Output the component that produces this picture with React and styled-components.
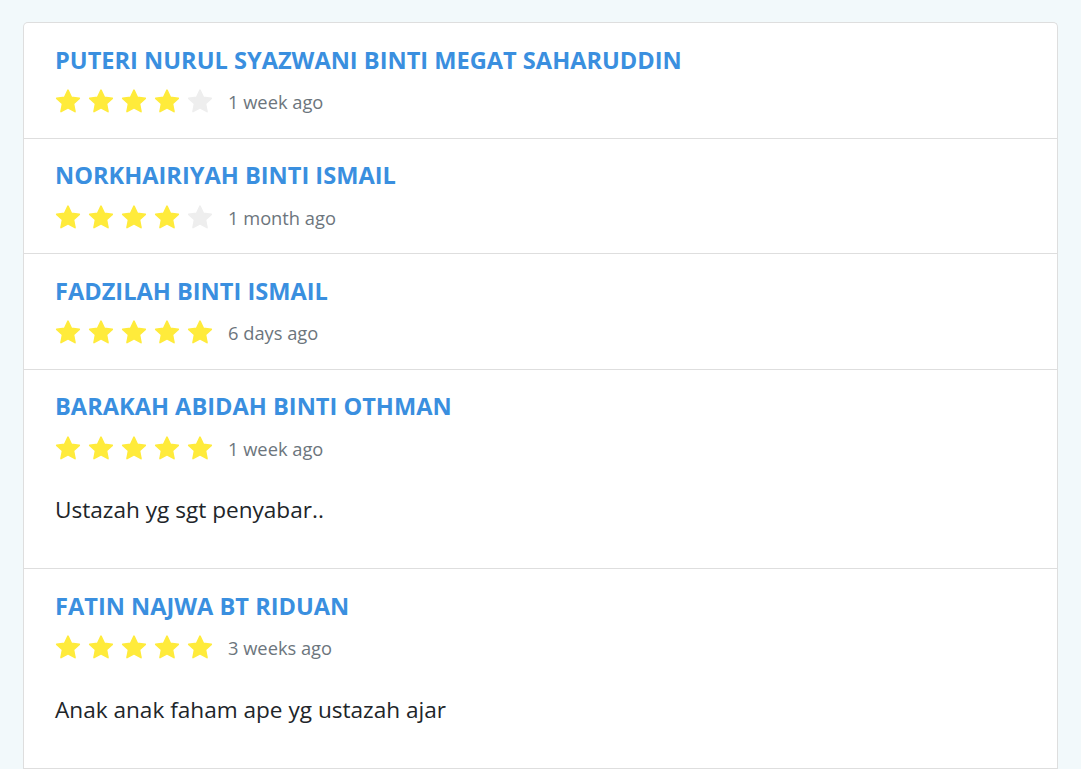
import React from "react";
import styled, { createGlobalStyle } from "styled-components";

const Global = createGlobalStyle`
  html, body { margin: 0; padding: 0; }
  body {
    background: #f2f9fb;
    font-family: "Open Sans", "Noto Sans", sans-serif;
  }
`;

const Page = styled.div`
  padding: 22px 23px 0 23px;
`;

const Card = styled.div`
  background: #ffffff;
  border: 1px solid #dedede;
  border-bottom: none;
  border-radius: 5px 5px 0 0;
`;

const Item = styled.div`
  padding: 20.5px 31px 23px 31px;
  border-bottom: 1px solid #dedede;
`;

const Name = styled.div`
  color: #3a8fdf;
  font-weight: 700;
  font-size: 23.6px;
  line-height: 32px;
`;

const Meta = styled.div`
  display: flex;
  align-items: center;
  margin-top: 13px;
  height: 26px;
`;

const Stars = styled.div`
  display: flex;
  gap: 7px;
`;

const When = styled.span`
  margin-left: 15px;
  color: #6c757d;
  font-size: 18.3px;
`;

const Body = styled.p`
  margin: 34px 0 20px 0;
  font-size: 22.6px;
  color: #212529;
  line-height: 30px;
`;

const Star = ({ on }) => (
  <svg width="26" height="25" viewBox="0 0 26 25">
    <path
      d="M13 1.2 L16.4 8.3 L24.3 9.3 L18.5 14.7 L20 22.6 L13 18.8 L6 22.6 L7.5 14.7 L1.7 9.3 L9.6 8.3 Z"
      fill={on ? "#ffeb3b" : "#eeeeee"}
      stroke={on ? "#ffeb3b" : "#eeeeee"}
      strokeWidth="1.6"
      strokeLinejoin="round"
    />
  </svg>
);

const reviews = [
  { name: "PUTERI NURUL SYAZWANI BINTI MEGAT SAHARUDDIN", rating: 4, when: "1 week ago" },
  { name: "NORKHAIRIYAH BINTI ISMAIL", rating: 4, when: "1 month ago" },
  { name: "FADZILAH BINTI ISMAIL", rating: 5, when: "6 days ago" },
  { name: "BARAKAH ABIDAH BINTI OTHMAN", rating: 5, when: "1 week ago", text: "Ustazah yg sgt penyabar.." },
  { name: "FATIN NAJWA BT RIDUAN", rating: 5, when: "3 weeks ago", text: "Anak anak faham ape yg ustazah ajar" },
];

export default function App() {
  return (
    <>
      <Global />
      <Page>
        <Card>
          {reviews.map((r, i) => (
            <Item key={i}>
              <Name>{r.name}</Name>
              <Meta>
                <Stars>
                  {[0, 1, 2, 3, 4].map((s) => (
                    <Star key={s} on={s < r.rating} />
                  ))}
                </Stars>
                <When>{r.when}</When>
              </Meta>
              {r.text && <Body>{r.text}</Body>}
            </Item>
          ))}
        </Card>
      </Page>
    </>
  );
}
